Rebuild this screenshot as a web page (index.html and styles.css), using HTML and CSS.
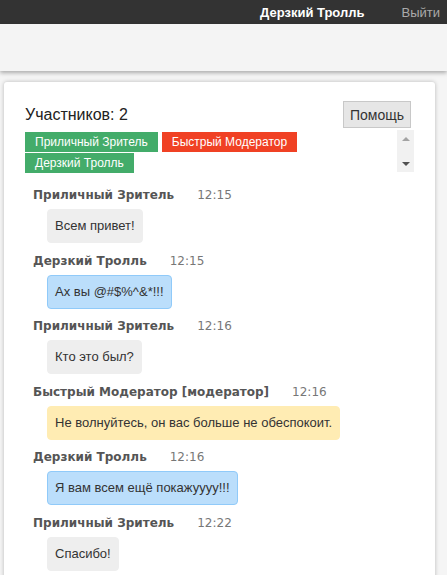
FILE: index.html
```html
<!DOCTYPE html>
<html lang="ru">
<head>
<meta charset="utf-8">
<link rel="stylesheet" href="styles.css">
</head>
<body>
<div class="topbar">
  <span class="user">Дерзкий Тролль</span>
  <span class="logout">Выйти</span>
</div>
<div class="band"></div>
<div class="main">
  <div class="card">
    <div class="head">
      <span class="count">Участников: 2</span>
      <button class="help">Помощь</button>
    </div>
    <div class="tagrow">
      <div class="tags">
        <span class="tag green">Приличный Зритель</span>
        <span class="tag red">Быстрый Модератор</span>
        <span class="tag green">Дерзкий Тролль</span>
      </div>
      <div class="scroll">
        <span class="arrow up"></span>
        <span class="arrow down"></span>
      </div>
    </div>
    <div class="messages">
      <div class="msg">
        <div class="meta"><span class="name">Приличный Зритель</span><span class="time">12:15</span></div>
        <div class="bubble gray">Всем привет!</div>
      </div>
      <div class="msg">
        <div class="meta"><span class="name">Дерзкий Тролль</span><span class="time">12:15</span></div>
        <div class="bubble blue">Ах вы @#$%^&amp;*!!!</div>
      </div>
      <div class="msg">
        <div class="meta"><span class="name">Приличный Зритель</span><span class="time">12:16</span></div>
        <div class="bubble gray">Кто это был?</div>
      </div>
      <div class="msg">
        <div class="meta"><span class="name">Быстрый Модератор [модератор]</span><span class="time">12:16</span></div>
        <div class="bubble yellow">Не волнуйтесь, он вас больше не обеспокоит.</div>
      </div>
      <div class="msg">
        <div class="meta"><span class="name">Дерзкий Тролль</span><span class="time">12:16</span></div>
        <div class="bubble blue">Я вам всем ещё покажуууу!!!</div>
      </div>
      <div class="msg">
        <div class="meta"><span class="name">Приличный Зритель</span><span class="time">12:22</span></div>
        <div class="bubble gray">Спасибо!</div>
      </div>
    </div>
  </div>
</div>
</body>
</html>
```
FILE: styles.css
```css
html, body {
  margin: 0;
  padding: 0;
}
body {
  background: #f5f5f5;
  font-family: "Liberation Sans", Arial, sans-serif;
  color: #222;
  overflow: hidden;
  height: 575px;
}
.topbar {
  height: 24px;
  background: #333;
  display: flex;
  justify-content: flex-end;
  align-items: center;
  padding-right: 7px;
  font-size: 13px;
}
.user {
  color: #fff;
  font-weight: bold;
  margin-right: 37px;
}
.logout {
  color: #aaa;
}
.band {
  height: 47px;
  background: #f4f4f4;
  box-shadow: 0 2px 4px rgba(0, 0, 0, 0.3);
  position: relative;
}
.main {
  padding: 11px 12px 0 4px;
}
.card {
  background: #fff;
  border-radius: 3px;
  box-shadow: 0 0 4px rgba(0, 0, 0, 0.25);
  padding: 19px 21px 10px 21px;
  height: 600px;
}
.head {
  display: flex;
  justify-content: space-between;
  align-items: center;
  height: 27px;
}
.count {
  font-size: 16px;
  color: #222;
}
.help {
  height: 27px;
  border: 1px solid #c8c8c8;
  background: #e6e6e6;
  padding: 0 6px;
  font-family: "Liberation Sans", Arial, sans-serif;
  font-size: 14px;
  color: #333;
  margin: 0 3px 0 0;
}
.tagrow {
  display: flex;
  margin-top: 2px;
  height: 42px;
}
.tags {
  width: 372px;
  display: flex;
  flex-wrap: wrap;
  align-content: flex-start;
  column-gap: 4px;
  row-gap: 1px;
  padding-top: 2px;
}
.tag {
  display: inline-block;
  height: 20px;
  line-height: 20px;
  padding: 0 10px;
  font-size: 12px;
  color: #fff;
}
.green { background: #43ac6a; }
.red { background: #f04124; }
.scroll {
  width: 17px;
  background: #f1f1f1;
  display: flex;
  flex-direction: column;
  justify-content: space-between;
  align-items: center;
  padding: 7px 0 6px;
  box-sizing: border-box;
}
.arrow {
  width: 0;
  height: 0;
  border-left: 4px solid transparent;
  border-right: 4px solid transparent;
}
.arrow.up { border-bottom: 4px solid #a3a3a3; }
.arrow.down { border-top: 4px solid #505050; }
.messages {
  margin-top: 13px;
  padding-left: 8px;
}
.msg {
  margin-bottom: 7.5px;
}
.meta {
  height: 20px;
  line-height: 20px;
  font-family: "DejaVu Sans", Verdana, sans-serif;
  font-size: 12px;
}
.name {
  font-weight: bold;
  color: #555;
}
.time {
  color: #777;
  margin-left: 23px;
}
.bubble {
  width: fit-content;
  margin: 4px 0 0 14px;
  padding: 7px 7px;
  line-height: 18px;
  border-radius: 4px;
  border: 1px solid transparent;
  font-family: "Liberation Sans", Arial, sans-serif;
  font-size: 13px;
  color: #333;
}
.bubble.gray { background: #eee; border-color: #eee; }
.bubble.blue { background: #bbdefb; border-color: #90caf9; }
.bubble.yellow { background: #ffecb3; border-color: #ffecb3; }
```
